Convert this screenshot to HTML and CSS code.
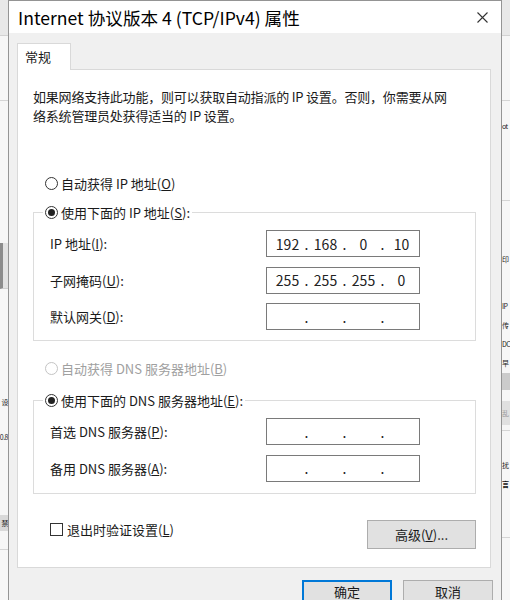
FILE: index.html
```html
<!DOCTYPE html>
<html lang="zh-CN">
<head>
  <meta charset="UTF-8">
  <title>Internet 协议版本 4 (TCP/IPv4) 属性</title>
  <link rel="stylesheet" href="styles.css">
</head>
<body>
  <div class="desk">
    <!-- janela de trás, só a borda esquerda aparece -->
    <div class="edge edge-left">
      <div class="blk top" style="height:35px"></div>
      <div class="blk line" style="height:64px"></div>
      <div class="blk" style="height:142px"></div>
      <div class="blk sel" style="height:45px"></div>
      <div class="blk" style="height:104px"></div>
      <div class="frag end">设</div>
      <div class="blk" style="height:16px"></div>
      <div class="frag end">0.8</div>
      <div class="blk" style="height:68px"></div>
      <div class="frag end band">禁</div>
      <div class="blk line" style="height:18px"></div>
    </div>

    <div class="dialog">
      <div class="titlebar">
        <span class="title">Internet 协议版本 4 (TCP/IPv4) 属性</span>
        <svg class="close" width="11" height="11" viewBox="0 0 11 11">
          <path d="M0.5 0.5 L10.5 10.5 M10.5 0.5 L0.5 10.5" stroke="#333" stroke-width="1.1" fill="none"/>
        </svg>
      </div>

      <div class="tabs">
        <div class="tab">常规</div>
      </div>

      <div class="panel">
        <p class="intro">如果网络支持此功能，则可以获取自动指派的 IP 设置。否则，你需要从网<br>络系统管理员处获得适当的 IP 设置。</p>

        <label class="radio first"><span class="dot"></span><span>自动获得 IP 地址(<u>O</u>)</span></label>

        <fieldset class="group">
          <legend><label class="radio"><span class="dot on"></span><span>使用下面的 IP 地址(<u>S</u>):</span></label></legend>
          <div class="fields">
            <div class="row">
              <span class="lbl">IP 地址(<u>I</u>):</span>
              <div class="ip"><span class="seg">192</span><span class="sep">.</span><span class="seg">168</span><span class="sep">.</span><span class="seg">0</span><span class="sep">.</span><span class="seg">10</span></div>
            </div>
            <div class="row">
              <span class="lbl">子网掩码(<u>U</u>):</span>
              <div class="ip"><span class="seg">255</span><span class="sep">.</span><span class="seg">255</span><span class="sep">.</span><span class="seg">255</span><span class="sep">.</span><span class="seg">0</span></div>
            </div>
            <div class="row">
              <span class="lbl">默认网关(<u>D</u>):</span>
              <div class="ip"><span class="seg"></span><span class="sep">.</span><span class="seg"></span><span class="sep">.</span><span class="seg"></span><span class="sep">.</span><span class="seg"></span></div>
            </div>
          </div>
        </fieldset>

        <label class="radio off"><span class="dot"></span><span>自动获得 DNS 服务器地址(<u>B</u>)</span></label>

        <fieldset class="group dns">
          <legend><label class="radio"><span class="dot on"></span><span>使用下面的 DNS 服务器地址(<u>E</u>):</span></label></legend>
          <div class="fields">
            <div class="row">
              <span class="lbl">首选 DNS 服务器(<u>P</u>):</span>
              <div class="ip"><span class="seg"></span><span class="sep">.</span><span class="seg"></span><span class="sep">.</span><span class="seg"></span><span class="sep">.</span><span class="seg"></span></div>
            </div>
            <div class="row">
              <span class="lbl">备用 DNS 服务器(<u>A</u>):</span>
              <div class="ip"><span class="seg"></span><span class="sep">.</span><span class="seg"></span><span class="sep">.</span><span class="seg"></span><span class="sep">.</span><span class="seg"></span></div>
            </div>
          </div>
        </fieldset>

        <div class="bottom">
          <label class="check"><span class="box"></span><span>退出时验证设置(<u>L</u>)</span></label>
          <button class="btn adv">高级(<u>V</u>)...</button>
        </div>
      </div>

      <div class="actions">
        <button class="btn default">确定</button>
        <button class="btn">取消</button>
      </div>
    </div>

    <!-- janela de trás, lado direito -->
    <div class="edge edge-right">
      <div class="blk top" style="height:35px"></div>
      <div class="blk line" style="height:64px"></div>
      <div class="blk" style="height:16px"></div>
      <div class="frag">ot</div>
      <div class="blk line" style="height:64px"></div>
      <div class="blk" style="height:49px"></div>
      <div class="frag">印</div>
      <div class="blk" style="height:28px"></div>
      <div class="frag">IP</div>
      <div class="frag">传</div>
      <div class="frag">DC</div>
      <div class="frag">早</div>
      <div class="blk dark" style="height:17px"></div>
      <div class="blk" style="height:11px"></div>
      <div class="frag band soft">乱</div>
      <div class="blk line" style="height:5px"></div>
      <div class="blk" style="height:25px"></div>
      <div class="frag">扰</div>
      <div class="frag strong">言</div>
      <div class="blk line" style="height:43px"></div>
    </div>
  </div>
</body>
</html>
```

FILE: styles.css
```css
body {
  margin: 0;
  width: 510px;
  height: 600px;
  overflow: hidden;
  font-family: "Noto Sans CJK SC", "Noto Sans", sans-serif;
  font-size: 13px;
  color: #1a1a1a;
  background: #f6f6f6;
}

.desk {
  display: flex;
  height: 600px;
}

/* bordas da janela de fundo */
.edge {
  width: 8px;
  flex: none;
  overflow: hidden;
  background: #f6f6f6;
}

.blk.top {
  background: #e8e8e8;
  border-bottom: 1px solid #d2d2d2;
}

.blk.line {
  border-bottom: 1px solid #d4d4d4;
}

.blk.sel {
  background: #e2e2e2;
  border-left: 3px solid #8c8c8c;
  border-bottom: 1px solid #cfcfcf;
}

.blk.dark {
  background: #cbcbcb;
}

/* restos de texto da janela de trás */
.frag {
  height: 19px;
  line-height: 19px;
  font-size: 7px;
  letter-spacing: -0.5px;
  white-space: nowrap;
  color: #222;
  display: flex;
  align-items: center;
}

.frag.end {
  justify-content: flex-end;
}

.frag.band {
  height: 16px;
  line-height: 16px;
  background: #d9d9d9;
}

.frag.soft {
  height: 24px;
  line-height: 24px;
  background: #e0e0e0;
  color: #999;
}

.frag.strong {
  font-weight: bold;
  color: #111;
}

/* janela do diálogo */
.dialog {
  width: 494px;
  height: 600px;
  flex: none;
  box-sizing: border-box;
  border: 1px solid #949494;
  border-bottom: none;
  background: #f0f0f0;
}

.titlebar {
  height: 32px;
  background: #ffffff;
  display: flex;
  align-items: center;
  justify-content: space-between;
  padding: 0 13px 0 9px;
}

.title {
  font-size: 17.6px;
  color: #000;
  white-space: nowrap;
}

.close {
  display: block;
}

.tabs {
  padding: 10px 0 0 8px;
  display: flex;
}

.tab {
  position: relative;
  z-index: 1;
  width: 45px;
  height: 26px;
  line-height: 26px;
  padding-left: 7px;
  margin-bottom: -1px;
  background: #ffffff;
  border: 1px solid #d9d9d9;
  border-bottom: none;
}

.panel {
  margin: 0 10px 0 8px;
  padding: 17px 14px 18px 15px;
  background: #ffffff;
  border: 1px solid #d9d9d9;
}

.intro {
  margin: 0;
  line-height: 19px;
  letter-spacing: -0.2px;
}

.radio {
  display: flex;
  align-items: center;
  gap: 3px;
  height: 20px;
  white-space: nowrap;
}

.radio.first {
  margin: 48px 0 0 12px;
}

.radio.off {
  margin: 17px 0 0 12px;
  color: #a0a0a0;
}

.dot {
  width: 13px;
  height: 13px;
  box-sizing: border-box;
  border: 1px solid #333;
  border-radius: 50%;
  background: #fff;
  display: flex;
  align-items: center;
  justify-content: center;
}

.dot.on::after {
  content: "";
  width: 7px;
  height: 7px;
  border-radius: 50%;
  background: #222;
}

.radio.off .dot {
  border-color: #c4c4c4;
}

.group {
  margin: 9px 0 0;
  padding: 8px 0 10px;
  border: 1px solid #dcdcdc;
  min-width: 0;
}

.group.dns {
  margin-top: 12px;
  padding-bottom: 11px;
}

.group legend {
  margin-left: 9px;
  padding: 0 2px;
}

.fields {
  display: flex;
  flex-direction: column;
  gap: 9.5px;
  padding-left: 16px;
}

.row {
  display: flex;
  align-items: center;
  height: 27px;
}

.lbl {
  width: 216px;
  white-space: nowrap;
}

.ip {
  width: 154px;
  height: 27px;
  box-sizing: border-box;
  border: 1px solid #7a7a7a;
  background: #fff;
  display: flex;
  align-items: center;
  padding-left: 5px;
  font-size: 14px;
  color: #222;
}

.seg {
  width: 31px;
  text-align: center;
}

.sep {
  width: 7px;
  text-align: center;
}

.bottom {
  display: flex;
  align-items: flex-start;
  margin-top: 26px;
  height: 29px;
}

.check {
  display: flex;
  align-items: center;
  gap: 4px;
  height: 20px;
  margin: 0 0 0 17px;
}

.box {
  width: 13px;
  height: 13px;
  box-sizing: border-box;
  border: 1px solid #333;
  background: #fff;
}

.btn {
  font-family: inherit;
  font-size: 13px;
  color: #1a1a1a;
  width: 90px;
  height: 29px;
  padding: 0;
  background: #e1e1e1;
  border: 1px solid #adadad;
  border-radius: 0;
}

.btn.adv {
  width: 109px;
  margin-left: auto;
}

.btn.default {
  border: 2px solid #0078d7;
}

/* a janela continua abaixo da tela; o texto sobe um pouco para caber */
.actions .btn {
  padding-bottom: 5px;
  line-height: 14px;
}

.actions {
  display: flex;
  justify-content: flex-end;
  gap: 11px;
  margin-top: 12px;
  padding-right: 8px;
}
```
